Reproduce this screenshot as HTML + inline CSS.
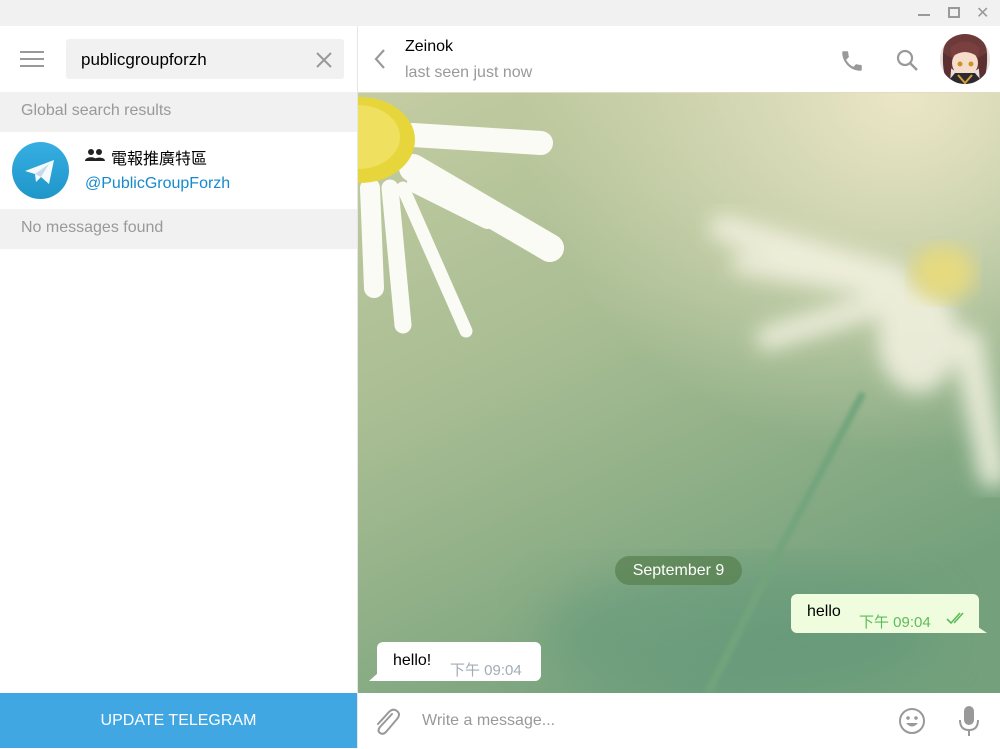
<!DOCTYPE html>
<html><head><meta charset="utf-8"><style>
*{margin:0;padding:0;box-sizing:border-box}
body{width:1000px;height:748px;overflow:hidden;background:#fff;font-family:"Liberation Sans","Noto Sans CJK TC",sans-serif;position:relative}
.abs{position:absolute}
</style></head><body>
<div class="abs" style="left:0;top:0;width:1000px;height:26px;background:#f1f1f1"></div>
<div class="abs" style="left:918px;top:14px;width:12px;height:2px;background:#999"></div>
<div class="abs" style="left:948px;top:7px;width:12px;height:11px;border:2px solid #999"></div>
<div class="abs" style="left:976px;top:3px;color:#999;font-size:16px">✕</div>

<div class="abs" style="left:20px;top:51px;width:24px;height:2px;background:#999;box-shadow:0 7px 0 #999,0 14px 0 #999"></div>
<div class="abs" style="left:66px;top:39px;width:278px;height:40px;background:#f1f1f1;border-radius:3px"></div>
<div class="abs" style="left:81px;top:50px;font-size:17px;color:#000">publicgroupforzh</div>
<svg class="abs" style="left:315px;top:51px" width="18" height="18"><path d="M2 2L16 16M16 2L2 16" stroke="#999" stroke-width="2"/></svg>
<div class="abs" style="left:0;top:92px;width:357px;height:40px;background:#f1f1f1"></div>
<div class="abs" style="left:21px;top:102px;font-size:16px;color:#999">Global search results</div>
<svg class="abs" style="left:12px;top:142px" width="57" height="57"><defs><linearGradient id="g" x1="0" y1="0" x2="0" y2="1"><stop offset="0" stop-color="#37aee2"/><stop offset="1" stop-color="#1e96c8"/></linearGradient></defs><circle cx="28.5" cy="28.5" r="28.5" fill="url(#g)"/><path d="M13 29L42 18L37 42L29 35L24 40L23 32Z" fill="#fff" opacity=".95"/><path d="M23 32L37 22L29 35Z" fill="#c8daea"/></svg>
<svg class="abs" style="left:85px;top:148px" width="21" height="14"><circle cx="6" cy="4" r="3" fill="#222"/><circle cx="14" cy="4" r="3" fill="#222"/><path d="M0 13C0 8 12 8 12 13ZM8 13C8 9 20 8 20 13Z" fill="#222"/></svg>
<div class="abs" style="left:111px;top:145px;font-size:16px;color:#000">電報推廣特區</div>
<div class="abs" style="left:85px;top:175px;font-size:16px;color:#168acd">@PublicGroupForzh</div>
<div class="abs" style="left:0;top:209px;width:357px;height:40px;background:#f1f1f1"></div>
<div class="abs" style="left:21px;top:219px;font-size:16px;color:#999">No messages found</div>
<div class="abs" style="left:0;top:693px;width:357px;height:55px;background:#40a7e3;color:#fff;font-size:16px;text-align:center;line-height:56px">UPDATE TELEGRAM</div>
<div class="abs" style="left:357px;top:26px;width:1px;height:722px;background:#e6e6e6"></div>

<svg class="abs" style="left:372px;top:48px" width="16" height="22"><path d="M12 2L4 11L12 20" stroke="#999" stroke-width="2.2" fill="none"/></svg>
<div class="abs" style="left:405px;top:38px;font-size:16px;color:#000">Zeinok</div>
<div class="abs" style="left:405px;top:64px;font-size:16px;color:#999">last seen just now</div>
<svg class="abs" style="left:839px;top:48px" width="26" height="26" viewBox="0 0 24 24"><path d="M6.6 10.8c1.4 2.8 3.8 5.1 6.6 6.6l2.2-2.2c.3-.3.7-.4 1-.2 1.1.4 2.3.6 3.6.6.6 0 1 .4 1 1V20c0 .6-.4 1-1 1C10.6 21 3 13.4 3 4c0-.6.4-1 1-1h3.5c.6 0 1 .4 1 1 0 1.3.2 2.5.6 3.6.1.3 0 .7-.2 1z" fill="#999"/></svg>
<svg class="abs" style="left:895px;top:48px" width="24" height="24"><circle cx="10" cy="10" r="7" stroke="#999" stroke-width="2.2" fill="none"/><path d="M15 15L22 22" stroke="#999" stroke-width="2.5"/></svg>
<svg class="abs" style="left:940px;top:33px" width="50" height="52"><defs><clipPath id="c"><circle cx="25" cy="26" r="25"/></clipPath></defs><g clip-path="url(#c)"><rect width="50" height="52" fill="#e8e0dc"/><ellipse cx="25" cy="20" rx="22" ry="20" fill="#6d3a3a"/><ellipse cx="25" cy="30" rx="13" ry="13" fill="#f6dccb"/><path d="M10 15Q25 2 40 15L38 24Q25 14 12 24Z" fill="#7a4040"/><circle cx="20" cy="31" r="2.5" fill="#c8952a"/><circle cx="31" cy="31" r="2.5" fill="#c8952a"/><path d="M5 52L15 40L35 40L45 52Z" fill="#2c2a30"/><path d="M18 42L25 50L32 42" stroke="#d4a23a" stroke-width="2" fill="none"/><path d="M3 20Q2 45 10 50L12 25Z M47 20Q48 45 40 50L38 25Z" fill="#5c2f30"/></g></svg>
<div class="abs" style="left:358px;top:92px;width:642px;height:1px;background:#e0dcc0"></div>

<svg class="abs" style="left:358px;top:93px" width="642" height="600">
<defs>
<linearGradient id="bg" x1="0" y1="0" x2="0.5" y2="1"><stop offset="0" stop-color="#c4cca2"/><stop offset="0.45" stop-color="#a9bd93"/><stop offset="1" stop-color="#74a17c"/></linearGradient>
<radialGradient id="tr" cx="0.85" cy="0" r="0.6"><stop offset="0" stop-color="#ebe6c6"/><stop offset="1" stop-color="#ebe6c6" stop-opacity="0"/></radialGradient>
<filter id="b1"><feGaussianBlur stdDeviation="10"/></filter>
<filter id="b2"><feGaussianBlur stdDeviation="25"/></filter>
<filter id="b0"><feGaussianBlur stdDeviation="2"/></filter>
</defs>
<rect width="642" height="600" fill="url(#bg)"/>
<rect width="642" height="600" fill="url(#tr)"/>
<ellipse cx="380" cy="540" rx="200" ry="70" fill="#5f967a" opacity=".5" filter="url(#b2)"/>
<path d="M505 300L420 460L350 600" stroke="#72a47c" stroke-width="7" fill="none" filter="url(#b0)"/>
<g filter="url(#b1)" fill="#f4f3e2" opacity=".85" stroke="#f4f3e2" stroke-linecap="round">
<line x1="365" y1="135" x2="540" y2="185" stroke-width="26"/>
<line x1="385" y1="170" x2="540" y2="195" stroke-width="22"/>
<line x1="410" y1="245" x2="540" y2="205" stroke-width="24"/>
<ellipse cx="560" cy="245" rx="40" ry="55" stroke="none"/>
<line x1="610" y1="250" x2="635" y2="380" stroke-width="30"/>
</g>
<ellipse cx="585" cy="180" rx="32" ry="28" fill="#e6da80" filter="url(#b1)"/>
<g stroke="#fbfbf6" stroke-linecap="round" fill="none">
<line x1="55" y1="42" x2="183" y2="50" stroke-width="24"/>
<line x1="55" y1="75" x2="192" y2="155" stroke-width="28"/>
<line x1="60" y1="90" x2="130" y2="125" stroke-width="22"/>
<line x1="45" y1="95" x2="108" y2="238" stroke-width="13"/>
<line x1="32" y1="95" x2="45" y2="232" stroke-width="17"/>
<line x1="12" y1="95" x2="16" y2="195" stroke-width="20"/>
</g>
<ellipse cx="2" cy="47" rx="55" ry="43" fill="#e6d63c"/>
<ellipse cx="0" cy="44" rx="42" ry="32" fill="#efe060"/>
</svg>

<div class="abs" style="left:615px;top:556px;width:127px;height:29px;border-radius:15px;background:rgba(90,130,80,.75);color:#fff;font-size:16px;text-align:center;line-height:29px">September 9</div>
<div class="abs" style="left:791px;top:594px;width:188px;height:39px;background:#effdde;border-radius:6px 6px 0 6px"></div>
<div class="abs" style="left:975px;top:625px;width:12px;height:8px;background:#effdde;clip-path:polygon(0 0,0 100%,100% 100%)"></div>
<div class="abs" style="left:807px;top:603px;font-size:16px;color:#000">hello</div>
<div class="abs" style="left:859px;top:611px;font-size:15px;color:#5ebb5a">下午 09:04</div>
<svg class="abs" style="left:946px;top:611px" width="24" height="14"><path d="M1 8L5 12L14 2M8 12L17 2" stroke="#5ebb5a" stroke-width="1.6" fill="none"/></svg>
<div class="abs" style="left:377px;top:642px;width:164px;height:39px;background:#fff;border-radius:6px 6px 6px 0"></div>
<div class="abs" style="left:369px;top:673px;width:9px;height:8px;background:#fff;clip-path:polygon(100% 0,0 100%,100% 100%)"></div>
<div class="abs" style="left:393px;top:652px;font-size:16px;color:#000">hello!</div>
<div class="abs" style="left:450px;top:659px;font-size:15px;color:#a0acb6">下午 09:04</div>

<svg class="abs" style="left:372px;top:706px" width="28" height="30" viewBox="0 0 28 30"><path d="M20 8L8 21Q5 25 8 27Q11 29 14 26L25 13Q29 8 25 5Q21 2 17 6L6 18" stroke="#999" stroke-width="2" fill="none" stroke-linecap="round"/></svg>
<div class="abs" style="left:422px;top:712px;font-size:16px;color:#999">Write a message...</div>
<svg class="abs" style="left:898px;top:707px" width="28" height="28"><circle cx="14" cy="14" r="12" stroke="#999" stroke-width="2" fill="none"/><circle cx="10" cy="11" r="1.8" fill="#999"/><circle cx="18" cy="11" r="1.8" fill="#999"/><path d="M8 16Q14 23 20 16Z" fill="#999"/></svg>
<svg class="abs" style="left:958px;top:705px" width="22" height="32"><rect x="6" y="1" width="10" height="19" rx="5" fill="#999"/><path d="M2 15Q2 25 11 25Q20 25 20 15M11 25V31" stroke="#999" stroke-width="2" fill="none"/></svg>
</body></html>
